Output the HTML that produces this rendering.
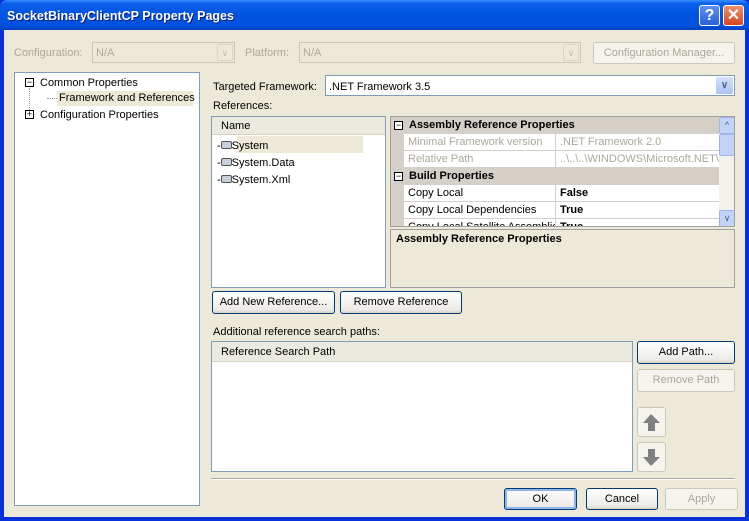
<!DOCTYPE html>
<html><head><style>
*{box-sizing:border-box;margin:0;padding:0}
body{width:749px;height:521px;overflow:hidden;font-family:"Liberation Sans",sans-serif;font-size:11px;background:#0831D9;position:relative}
.a{position:absolute}
#win{left:4px;top:30px;width:741px;height:487px;background:#ECE9D8}
#title{left:0;top:0;width:749px;height:30px;background:linear-gradient(#3A8CFF 0,#0A5FEA 12%,#0054E3 50%,#0050DD 85%,#0040C0 100%);border-radius:7px 7px 0 0}
.tt{color:#fff;font-weight:bold;font-size:12.5px;left:7px;top:9px;text-shadow:1px 1px #0a1e7a}
.tb{width:21px;height:21px;border:1px solid #fff;border-radius:3px;color:#fff;font-weight:bold;font-size:16px;text-align:center;line-height:19px}
.btn{border:1px solid #003C74;border-radius:3px;background:linear-gradient(#fff,#ECEBE6 85%,#D6D0C5);text-align:center;line-height:21px;color:#000}
.dis{border:1px solid #C9C7BA;border-radius:3px;background:#F4F3EE;color:#ACA899;text-align:center;line-height:20px}
.box{background:#fff;border:1px solid #7F9DB9}
.g{color:#ACA899}
.hdr{background:#EBEAE0;border-bottom:1px solid #D6D2C2;height:18px;line-height:18px;padding-left:9px}
.row{height:17px;line-height:17px;border-bottom:1px solid #D4D0C8;white-space:nowrap}
.cat{background:#D4D0C8;font-weight:bold}
.nm{display:inline-block;width:147px;overflow:hidden;vertical-align:top}
.v{position:absolute;left:151px;top:0;padding-left:4px;border-left:1px solid #D4D0C8;height:16px}
.pm{width:9px;height:9px;border:1px solid #000;background:#fff;font-size:9px;line-height:6px;text-align:center}
</style></head><body>
<div id="title" class="a"></div>
<div class="a tt">SocketBinaryClientCP Property Pages</div>
<div class="a tb" style="left:699px;top:5px;background:linear-gradient(#5C8FF5,#2A5FD8)">?</div>
<div class="a tb" style="left:723px;top:5px;background:linear-gradient(#F08F6E,#D8461F)">✕</div>
<div id="win" class="a"></div>

<div class="a g" style="left:14px;top:47px">Configuration:</div>
<div class="a" style="left:92px;top:42px;width:143px;height:21px;border:1px solid #C9C7BA;background:#ECE9D8"><span class="g" style="position:absolute;left:3px;top:4px">N/A</span><div class="a" style="right:1px;top:1px;width:16px;height:17px;border:1px solid #D8D5C8;border-radius:2px;color:#C0BCAF;text-align:center;font-size:9px;line-height:16px">&#8744;</div></div>
<div class="a g" style="left:245px;top:47px">Platform:</div>
<div class="a" style="left:299px;top:42px;width:282px;height:21px;border:1px solid #C9C7BA;background:#ECE9D8"><span class="g" style="position:absolute;left:3px;top:4px">N/A</span><div class="a" style="right:1px;top:1px;width:16px;height:17px;border:1px solid #D8D5C8;border-radius:2px;color:#C0BCAF;text-align:center;font-size:9px;line-height:16px">&#8744;</div></div>
<div class="a dis" style="left:593px;top:42px;width:142px;height:22px">Configuration Manager...</div>

<div class="a box" style="left:14px;top:72px;width:186px;height:434px"></div>
<div class="a pm" style="left:25px;top:78px">−</div>
<div class="a" style="left:40px;top:77px">Common Properties</div>
<div class="a" style="left:29px;top:88px;height:30px;border-left:1px dotted #999"></div>
<div class="a" style="left:47px;top:98px;width:10px;border-top:1px dotted #999"></div>
<div class="a" style="left:57px;top:91px;width:136px;height:15px;background:#ECE9D8"></div>
<div class="a" style="left:59px;top:92px">Framework and References</div>
<div class="a pm" style="left:25px;top:110px">+</div>
<div class="a" style="left:40px;top:109px">Configuration Properties</div>

<div class="a" style="left:213px;top:81px">Targeted Framework:</div>
<div class="a" style="left:325px;top:75px;width:410px;height:21px;border:1px solid #7F9DB9;background:#fff"><span style="position:absolute;left:3px;top:5px">.NET Framework 3.5</span><div class="a" style="right:1px;top:1px;width:17px;height:17px;border-radius:2px;background:linear-gradient(#D4E2FC,#A9C3F5);color:#4D6185;text-align:center;font-size:10px;line-height:17px;font-weight:bold">&#8744;</div></div>
<div class="a" style="left:213px;top:100px">References:</div>

<div class="a box" style="left:211px;top:116px;width:175px;height:172px">
<div class="hdr">Name</div>
<div class="a" style="left:25px;top:19px;width:126px;height:17px;background:#ECE9D8"></div>
<div class="a" style="left:5px;top:22px;line-height:14px">-<span style="display:inline-block;width:11px;height:8px;border:1px solid #555;background:#C8D0DC;border-radius:2px"></span>System</div>
<div class="a" style="left:5px;top:39px;line-height:14px">-<span style="display:inline-block;width:11px;height:8px;border:1px solid #555;background:#C8D0DC;border-radius:2px"></span>System.Data</div>
<div class="a" style="left:5px;top:56px;line-height:14px">-<span style="display:inline-block;width:11px;height:8px;border:1px solid #555;background:#C8D0DC;border-radius:2px"></span>System.Xml</div>
</div>

<div class="a" style="left:390px;top:116px;width:345px;height:111px;border:1px solid #A0A0A0;background:#D4D0C8;overflow:hidden">
 <div class="a" style="left:13px;top:0;width:315px;height:110px;background:#fff"></div>
 <div class="a row cat" style="left:0;top:0;width:328px;padding-left:18px">Assembly Reference Properties</div>
 <div class="a row g" style="left:13px;top:17px;width:315px;padding-left:4px"><span class="nm">Minimal Framework version</span><span class="v">.NET Framework 2.0</span></div>
 <div class="a row g" style="left:13px;top:34px;width:315px;padding-left:4px;overflow:hidden"><span class="nm">Relative Path</span><span class="v">..\..\..\WINDOWS\Microsoft.NET\</span></div>
 <div class="a row cat" style="left:0;top:51px;width:328px;padding-left:18px">Build Properties</div>
 <div class="a row" style="left:13px;top:68px;width:315px;padding-left:4px"><span class="nm">Copy Local</span><b class="v">False</b></div>
 <div class="a row" style="left:13px;top:85px;width:315px;padding-left:4px"><span class="nm">Copy Local Dependencies</span><b class="v">True</b></div>
 <div class="a row" style="left:13px;top:102px;width:315px;padding-left:4px"><span class="nm">Copy Local Satellite Assemblies</span><b class="v">True</b></div>
 <div class="a pm" style="left:3px;top:4px">−</div>
 <div class="a pm" style="left:3px;top:55px">−</div>
 <div class="a" style="left:328px;top:0;width:16px;height:110px;background:#F3F1EC"></div>
 <div class="a" style="left:328px;top:0;width:16px;height:17px;background:#C1D3FB;border:1px solid #9FB5E8;border-radius:2px;color:#4D6185;font-size:9px;text-align:center;line-height:15px">^</div>
 <div class="a" style="left:328px;top:17px;width:16px;height:22px;background:#C1D3FB;border:1px solid #9FB5E8;border-radius:2px"></div>
 <div class="a" style="left:328px;top:93px;width:16px;height:17px;background:#C1D3FB;border:1px solid #9FB5E8;border-radius:2px;color:#4D6185;font-size:9px;text-align:center;line-height:15px">&#8744;</div>
</div>
<div class="a" style="left:390px;top:229px;width:345px;height:59px;border:1px solid #A0A0A0;background:#ECE9D8;padding:3px 5px;font-weight:bold">Assembly Reference Properties</div>

<div class="a btn" style="left:212px;top:291px;width:123px;height:23px">Add New Reference...</div>
<div class="a btn" style="left:340px;top:291px;width:122px;height:23px">Remove Reference</div>

<div class="a" style="left:213px;top:326px">Additional reference search paths:</div>
<div class="a box" style="left:211px;top:341px;width:422px;height:131px"><div class="hdr" style="height:20px;line-height:20px">Reference Search Path</div></div>
<div class="a btn" style="left:637px;top:341px;width:98px;height:23px">Add Path...</div>
<div class="a dis" style="left:637px;top:369px;width:98px;height:23px">Remove Path</div>
<div class="a" style="left:637px;top:407px;width:29px;height:30px;border:1px solid #C9C7BA;border-radius:3px;background:#F4F3EE"><svg width="27" height="28"><path d="M13 6 L22 15 L17 15 L17 23 L10 23 L10 15 L5 15 Z" fill="#808080"/></svg></div>
<div class="a" style="left:637px;top:442px;width:29px;height:30px;border:1px solid #C9C7BA;border-radius:3px;background:#F4F3EE"><svg width="27" height="28"><path d="M13 23 L22 14 L17 14 L17 6 L10 6 L10 14 L5 14 Z" fill="#808080"/></svg></div>

<div class="a" style="left:211px;top:478px;width:524px;height:2px;border-top:1px solid #ACA899;border-bottom:1px solid #fff"></div>
<div class="a btn" style="left:504px;top:488px;width:73px;height:22px;box-shadow:inset 0 0 0 2px #8FB3EE">OK</div>
<div class="a btn" style="left:586px;top:488px;width:72px;height:22px">Cancel</div>
<div class="a dis" style="left:665px;top:488px;width:73px;height:22px">Apply</div>
</body></html>
